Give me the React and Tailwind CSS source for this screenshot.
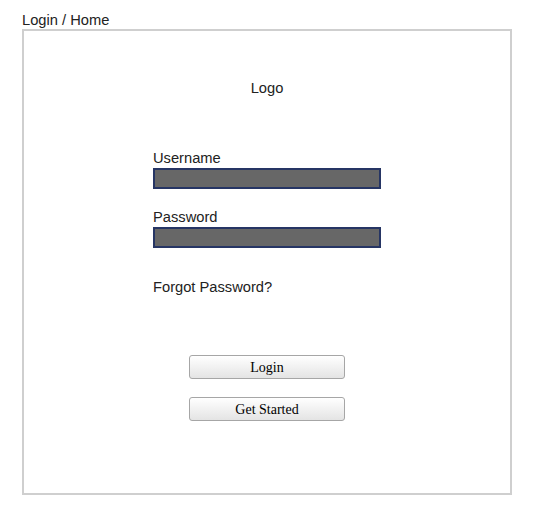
import React from 'react';

const sans = { fontFamily: '"Liberation Sans", Arial, sans-serif' };

const Field = ({ label }) => (
  <div className="flex flex-col">
    <label className="pt-[1px] text-[14.7px] leading-[17px] text-[#222]">{label}</label>
    <div className="mt-[1px] h-[21px] w-[228px] border-2 border-[#263564] bg-[#676767]" />
  </div>
);

const FormButton = ({ children, className = '' }) => (
  <button
    type="button"
    className={`h-[24px] w-[156px] rounded-[3px] border border-[#a6a6a6] bg-gradient-to-b from-white to-[#e4e4e4] pt-[2px] text-[14px] leading-none text-black font-['Liberation_Serif',serif] ${className}`}
  >
    {children}
  </button>
);

const App = () => {
  return (
    <div className="min-h-[517px] w-[544px] bg-white pl-[22px] pt-[12px] font-['Liberation_Sans',Arial,sans-serif]" style={sans}>
      <div className="text-[14.7px] leading-[17px] text-[#222]">Login / Home</div>

      <div className="flex h-[466px] w-[490px] flex-col items-center border-2 border-[#cfcfcf] pt-[49px]">
        <div className="text-[14.7px] leading-[17px] text-[#222]">Logo</div>

        <div className="mt-[52px] flex w-[228px] flex-col">
          <Field label="Username" />
          <div className="mt-[19px]">
            <Field label="Password" />
          </div>
          <div className="mt-[31px] text-[14.7px] leading-[17px] text-[#222]">Forgot Password?</div>
        </div>

        <FormButton className="mt-[59px]">Login</FormButton>
        <FormButton className="mt-[18px]">Get Started</FormButton>
      </div>
    </div>
  );
};

export default App;
